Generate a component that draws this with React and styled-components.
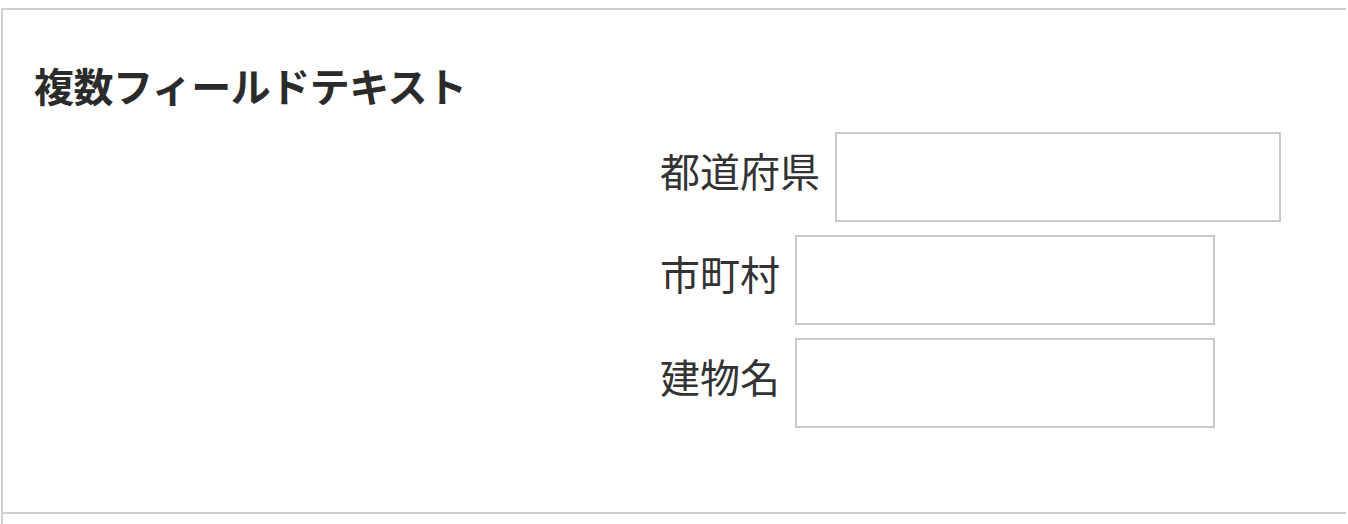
import React from "react";
import styled, { createGlobalStyle } from "styled-components";

const GlobalStyle = createGlobalStyle`
  html, body {
    margin: 0;
    padding: 0;
    background: #ffffff;
  }
  body {
    font-family: "Noto Sans CJK JP", "Noto Sans", sans-serif;
    color: #333333;
  }
`;

const Frame = styled.div`
  margin-left: 1px;
  min-height: 524px;
  border-left: 2px solid #cfcfcf;
  box-sizing: border-box;
`;

const Section = styled.section`
  margin: 8px 2px 0 0;
  height: 506px;
  box-sizing: border-box;
  border-top: 2px solid #cfcfcf;
  border-bottom: 2px solid #cfcfcf;
  padding: 55px 0 0 31px;
`;

const Title = styled.h2`
  margin: 0;
  font-size: 40px;
  line-height: 40px;
  font-weight: 700;
  color: #2b2b2b;
  letter-spacing: -0.5px;
`;

const Fields = styled.div`
  display: flex;
  flex-direction: column;
  gap: 13px;
  margin: 27px 0 0 626px;
`;

const Row = styled.label`
  display: flex;
  align-items: center;
  gap: 15px;
`;

const Label = styled.span`
  font-size: 40px;
  line-height: 40px;
  color: #333333;
  margin-bottom: 14px;
  white-space: nowrap;
`;

const Input = styled.input`
  width: ${(p) => p.$w}px;
  height: 90px;
  box-sizing: border-box;
  border: 2px solid #c9c9c9;
  border-radius: 0;
  background: #ffffff;
  padding: 0 10px;
  font-size: 32px;
  font-family: inherit;
  outline: none;
`;

const fields = [
  { label: "都道府県", width: 446 },
  { label: "市町村", width: 420 },
  { label: "建物名", width: 420 },
];

export default function App() {
  return (
    <>
      <GlobalStyle />
      <Frame>
        <Section>
          <Title>複数フィールドテキスト</Title>
          <Fields>
            {fields.map((f) => (
              <Row key={f.label}>
                <Label>{f.label}</Label>
                <Input type="text" $w={f.width} />
              </Row>
            ))}
          </Fields>
        </Section>
      </Frame>
    </>
  );
}
